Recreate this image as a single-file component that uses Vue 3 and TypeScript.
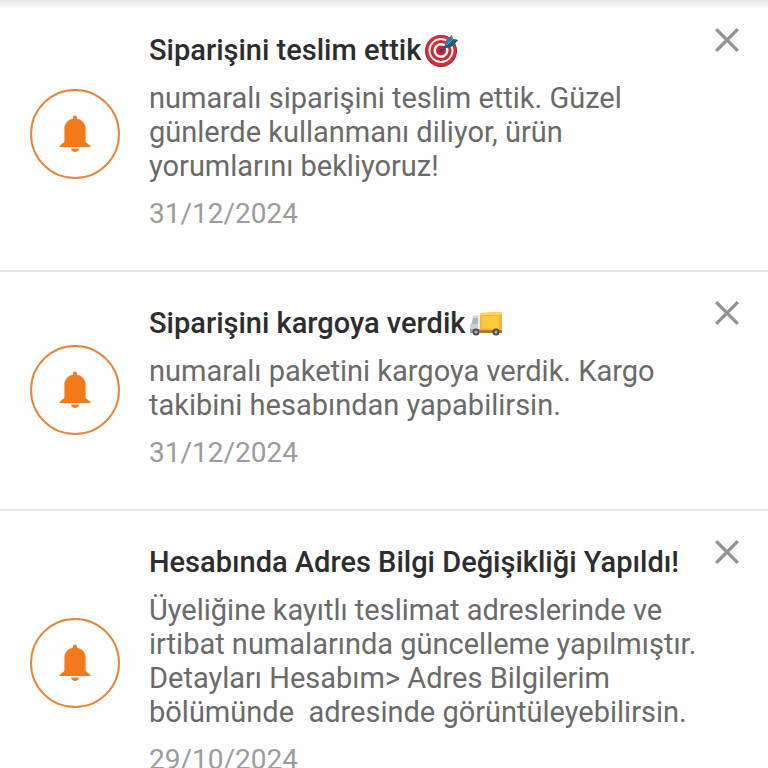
<script setup lang="ts">
import { ref } from 'vue'

interface Notice {
  id: number
  title: string
  emoji?: 'target' | 'truck'
  body: string
  date: string
}

const notices = ref<Notice[]>([
  {
    id: 1,
    title: 'Siparişini teslim ettik',
    emoji: 'target',
    body: 'numaralı siparişini teslim ettik. Güzel günlerde kullanmanı diliyor, ürün yorumlarını bekliyoruz!',
    date: '31/12/2024',
  },
  {
    id: 2,
    title: 'Siparişini kargoya verdik',
    emoji: 'truck',
    body: 'numaralı paketini kargoya verdik. Kargo takibini hesabından yapabilirsin.',
    date: '31/12/2024',
  },
  {
    id: 3,
    title: 'Hesabında Adres Bilgi Değişikliği Yapıldı!',
    body: 'Üyeliğine kayıtlı teslimat adreslerinde ve irtibat numalarında güncelleme yapılmıştır. Detayları Hesabım> Adres Bilgilerim bölümünde  adresinde görüntüleyebilirsin.',
    date: '29/10/2024',
  },
])

function dismiss(id: number): void {
  notices.value = notices.value.filter((n) => n.id !== id)
}
</script>

<template>
  <main class="screen">
    <div class="bar-shadow"></div>
    <ul class="list">
      <li v-for="n in notices" :key="n.id" class="item">
        <span class="badge">
          <svg class="bell" viewBox="0 0 32 38" aria-hidden="true">
            <path
              d="M16 0.500c1.200 0 1.900.9 1.900 2v1.200C23.500 4.700 26.600 8.500 26.600 14v12.500c0 1.500 5 3.200 5 5.500H.4c0-2.300 5-4 5-5.500V14C5.400 8.500 8.500 4.700 14.100 3.700V2.500c0-1.100.7-2 1.900-2z"
            />
            <path d="M12 33.500h8c-.4 2-1.900 3.500-4 3.500s-3.600-1.500-4-3.500z" />
          </svg>
        </span>
        <div class="content">
          <h2 class="title">
            <span>{{ n.title }}</span>
            <svg v-if="n.emoji === 'target'" class="emoji" viewBox="0 0 34 34" aria-hidden="true">
              <circle cx="16" cy="18" r="16" fill="#a51f2a" />
              <circle cx="16" cy="17.500" r="15.500" fill="#cf3039" />
              <circle cx="16" cy="17.500" r="12.500" fill="#fbf3f2" />
              <circle cx="16" cy="17.500" r="10.500" fill="#c92c37" />
              <circle cx="16" cy="17.500" r="7.500" fill="#fbf3f2" />
              <circle cx="16" cy="17.500" r="5" fill="#d3202f" />
              <path d="M16 18L26 8" stroke="#264e68" stroke-width="2.500" stroke-linecap="round" />
              <path d="M20 14l1-7 6-5 1 4 5 1-5 6-7 2z" fill="#2b8099" />
              <path d="M20 14l8-8 5 1-5 6-7 2z" fill="#1f5f7b" />
              <path d="M22 12l6-6" stroke="#53b2c6" stroke-width="1" />
            </svg>
            <svg v-else-if="n.emoji === 'truck'" class="emoji" viewBox="0 0 34 34" aria-hidden="true">
              <path d="M11 7l20-1 2 1v19H11z" fill="#f4b92d" />
              <path d="M11 7l20-1 2 1-1 2H11z" fill="#fbd65b" />
              <path d="M13 10h17v12H13z" fill="#fbc941" />
              <path d="M11 24h22v3H11z" fill="#b07b27" />
              <path d="M4 10l7-1v18H1v-8l2-3z" fill="#ccd3d6" />
              <path d="M4 12h5v6H3z" fill="#a9b9c0" />
              <path d="M9 9h2v17H9z" fill="#e9eced" />
              <path d="M1 23h10v4H1z" fill="#9ba3a5" />
              <circle cx="7" cy="26" r="3.500" fill="#4b4b4f" />
              <circle cx="7" cy="26" r="1.500" fill="#b7b7b9" />
              <circle cx="27" cy="26" r="3.500" fill="#4b4b4f" />
              <circle cx="27" cy="26" r="1.500" fill="#b7b7b9" />
            </svg>
          </h2>
          <p class="body">{{ n.body }}</p>
          <time class="date">{{ n.date }}</time>
        </div>
        <button class="close" type="button" aria-label="Kapat" @click="dismiss(n.id)">
          <svg viewBox="0 0 24 24" aria-hidden="true">
            <path d="M2 2l20 20M22 2l-20 20" />
          </svg>
        </button>
      </li>
    </ul>
  </main>
</template>

<style>
body {
  background: #fff;
}
</style>

<style scoped>
.screen {
  height: 100vh;
  overflow: hidden;
  display: flex;
  flex-direction: column;
  background: #fefefe;
  font-family: Roboto, 'Liberation Sans', sans-serif;
  font-size: 29px;
  line-height: 34px;
}
.bar-shadow {
  position: relative;
  z-index: 1;
  flex: none;
  height: 8px;
  margin-bottom: -9px;
  background: linear-gradient(#e6e6e6, #f9f9f9);
}
.list {
  flex: 1;
  min-height: 0;
  margin: 0;
  padding: 0;
  list-style: none;
  overflow-y: auto;
  scrollbar-width: none;
}
.item {
  display: flex;
  align-items: center;
  padding: 34px 28px 39px 30px;
  border-bottom: 2px solid #e4e4e4;
}
.badge {
  box-sizing: border-box;
  flex: none;
  display: flex;
  align-items: center;
  justify-content: center;
  width: 90px;
  height: 90px;
  margin-top: 4px;
  border: 2px solid #e5873b;
  border-radius: 50%;
}
.bell {
  width: 32px;
  height: 38px;
  fill: #f27a1a;
}
.content {
  flex: 1;
  min-width: 0;
  margin-left: 29px;
  display: flex;
  flex-direction: column;
  gap: 14px;
}
.title {
  display: flex;
  align-items: center;
  gap: 4px;
  margin: 0;
  color: #2d2d2f;
  font-size: 29px;
  font-weight: 500;
  white-space: nowrap;
}
.emoji {
  flex: none;
  width: 34px;
  height: 34px;
}
.body {
  margin: 0;
  color: #6a6a6a;
  white-space: pre-wrap;
}
.date {
  color: #9c9c9c;
  font-size: 28px;
}
.close {
  flex: none;
  align-self: flex-start;
  display: flex;
  margin-top: -6px;
  padding: 0;
  border: 0;
  background: none;
  cursor: pointer;
}
.close svg {
  width: 26px;
  height: 26px;
  fill: none;
  stroke: #919191;
  stroke-width: 3;
}
</style>
